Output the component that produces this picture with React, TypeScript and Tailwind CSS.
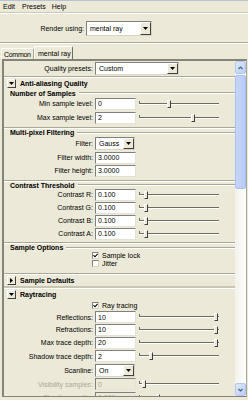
import React from "react";

const FONT = "font-['Liberation_Sans',Arial,sans-serif]";

function DownTri({ color = "#000" }: { color?: string }) {
  return (
    <svg width="5" height="3" viewBox="0 0 5 3">
      <path d="M0 0H5L2.5 3Z" fill={color} />
    </svg>
  );
}

function Dropdown({ w, text, h = "h-[13px]" }: { w: string; text: string; h?: string }) {
  return (
    <div className={`${w} ${h} flex bg-white border border-[#7f7f7f] border-b-[#d8d5c8] border-r-[#d8d5c8]`}>
      <div className="flex-1 flex items-center pl-[3px] overflow-hidden whitespace-nowrap">{text}</div>
      <div className="w-[11px] h-full bg-[#ece9d8] border border-white border-r-[#404040] border-b-[#404040] flex items-center justify-center">
        <DownTri />
      </div>
    </div>
  );
}

function Input({ val, disabled = false }: { val: string; disabled?: boolean }) {
  return (
    <div
      className={`w-[41px] h-[12px] flex items-center pl-[2px] border border-[#808080] border-b-[#e4e2d6] border-r-[#e4e2d6] ${
        disabled ? "bg-[#ece9d8] text-[#aca899]" : "bg-white"
      }`}
    >
      {val}
    </div>
  );
}

function Slider({ pos }: { pos: number }) {
  return (
    <div className="relative w-[80px] h-full ml-[3px]">
      <div className="absolute left-0 right-0 top-1/2 -translate-y-1/2 h-[2px] border-t border-[#6e6c62] border-b border-b-white" />
      <div className="absolute left-0 top-1/2 -translate-y-[3px] w-[1px] h-[3px] bg-[#6e6c62]" />
      <div
        className="absolute top-1/2 -translate-y-1/2 w-[4px] h-[8px] bg-[#ece9d8] border border-white border-r-[#404040] border-b-[#404040]"
        style={{ left: `${Math.round(pos * 75) + 2}px` }}
      />
    </div>
  );
}

function Label({ text, disabled = false }: { text: string; disabled?: boolean }) {
  return (
    <div className={`w-[91px] text-right pr-[2px] whitespace-nowrap ${disabled ? "text-[#aca899]" : ""}`}>{text}</div>
  );
}

function FieldRow({
  h,
  label,
  val,
  pos,
  disabled = false,
}: {
  h: string;
  label: string;
  val: string;
  pos?: number;
  disabled?: boolean;
}) {
  return (
    <div className={`${h} flex items-center`}>
      <Label text={label} disabled={disabled} />
      <Input val={val} disabled={disabled} />
      {pos !== undefined && <Slider pos={pos} />}
    </div>
  );
}

function Line() {
  return <div className="w-full h-[2px] border-t border-[#aca899] border-b border-b-white" />;
}

function Sep({ h }: { h: string }) {
  return (
    <div className={`${h} flex items-end`}>
      <Line />
    </div>
  );
}

function Title({ h, text }: { h: string; text: string }) {
  return (
    <div className={`${h} flex items-center pl-[6px]`}>
      <div className="font-bold whitespace-nowrap">{text}</div>
      <div className="flex-1 ml-[3px] h-[2px] border-t border-[#aca899] border-b border-b-white" />
    </div>
  );
}

function Header({ h, text, open }: { h: string; text: string; open: boolean }) {
  return (
    <div className={`${h} flex items-center pl-[3px]`}>
      <div className="w-[9px] h-[9px] bg-[#ece9d8] border border-white border-r-[#404040] border-b-[#404040] flex items-center justify-center">
        {open ? (
          <svg width="5" height="3" viewBox="0 0 5 3">
            <path d="M0 0H5L2.5 3Z" fill="#000" />
          </svg>
        ) : (
          <svg width="3" height="5" viewBox="0 0 3 5">
            <path d="M0 0V5L3 2.5Z" fill="#000" />
          </svg>
        )}
      </div>
      <div className="ml-[4px] font-bold whitespace-nowrap">{text}</div>
    </div>
  );
}

function Check({ h, text }: { h: string; text: string }) {
  return (
    <div className={`${h} flex items-center pl-[88px]`}>
      <div className="w-[7px] h-[7px] bg-white border border-[#808080] border-b-[#d8d5c8] border-r-[#d8d5c8] flex items-center justify-center">
        {text !== "Jitter" && (
          <svg width="5" height="5" viewBox="0 0 5 5">
            <path d="M0.5 2.2L2 3.8L4.6 0.8" stroke="#000" strokeWidth="1.1" fill="none" />
          </svg>
        )}
      </div>
      <div className="ml-[3px] whitespace-nowrap">{text}</div>
    </div>
  );
}

function ScrollBtn({ up }: { up: boolean }) {
  return (
    <div className="h-[13px] rounded-[2px] border border-[#b3c7f3] bg-gradient-to-br from-[#dfe9fd] to-[#b9cdf8] flex items-center justify-center">
      <svg width="5" height="4" viewBox="0 0 5 4">
        <path d={up ? "M0.5 3L2.5 1L4.5 3" : "M0.5 1L2.5 3L4.5 1"} stroke="#4d6185" strokeWidth="1.2" fill="none" />
      </svg>
    </div>
  );
}

export default function App() {
  return (
    <div className={`w-[248px] h-[400px] overflow-hidden bg-[#ece9d8] text-[7px] leading-none text-black ${FONT}`}>
      {/* menu bar */}
      <div className="h-[13px] flex items-center border-t border-[#b9c3d6] border-b border-b-[#cdcabb] pl-[3px]">
        <span>Edit</span>
        <span className="ml-[7px]">Presets</span>
        <span className="ml-[6px]">Help</span>
      </div>
      {/* render using */}
      <div className="h-[30px] flex items-center border-t border-white border-b border-b-[#aca899]">
        <div className="w-[86px] text-right pr-[2px]">Render using:</div>
        <Dropdown w="w-[66px]" h="h-[15px]" text="mental ray" />
      </div>
      {/* tabs */}
      <div className="h-[16px] flex items-end pl-[1px] border-t border-white">
        <div className="h-[11px] w-[33px] flex items-center pl-[2px] tracking-[-0.3px] border-t border-l border-white border-r border-r-[#aca899] rounded-tl-[2px] whitespace-nowrap">
          Common
        </div>
        <div className="h-[13px] w-[39px] flex items-center pl-[3px] border-t border-l border-white border-r border-r-[#716f64] rounded-t-[2px] whitespace-nowrap">
          mental ray
        </div>
      </div>
      {/* panel */}
      <div className="ml-[2px] w-[245px] h-[338px] border-t-2 border-l-2 border-[#85837a] border-r border-r-[#a7a492] border-b border-b-[#85837a] flex overflow-hidden">
        <div className="w-[231px] h-full overflow-hidden flex flex-col shrink-0">
          <div className="h-[15px] shrink-0 flex items-center">
            <Label text="Quality presets:" />
            <Dropdown w="w-[84px]" text="Custom" />
          </div>
          <Sep h="h-[2px] shrink-0" />
          <Header h="h-[11px] shrink-0" text="Anti-aliasing Quality" open />
          <Title h="h-[8px] shrink-0" text="Number of Samples" />
          <FieldRow h="h-[13px] shrink-0" label="Min sample level:" val="0" pos={0.34} />
          <FieldRow h="h-[15px] shrink-0" label="Max sample level:" val="2" pos={0.67} />
          <Sep h="h-[4px] shrink-0" />
          <Title h="h-[7px] shrink-0" text="Multi-pixel Filtering" />
          <div className="h-[15px] shrink-0 flex items-center">
            <Label text="Filter:" />
            <Dropdown w="w-[40px]" text="Gauss" />
          </div>
          <FieldRow h="h-[13px] shrink-0" label="Filter width:" val="3.0000" />
          <FieldRow h="h-[13px] shrink-0" label="Filter height:" val="3.0000" />
          <Sep h="h-[5px] shrink-0" />
          <Title h="h-[6px] shrink-0" text="Contrast Threshold" />
          <FieldRow h="h-[13px] shrink-0" label="Contrast R:" val="0.100" pos={0.04} />
          <FieldRow h="h-[13px] shrink-0" label="Contrast G:" val="0.100" pos={0.04} />
          <FieldRow h="h-[13px] shrink-0" label="Contrast B:" val="0.100" pos={0.04} />
          <FieldRow h="h-[13px] shrink-0" label="Contrast A:" val="0.100" pos={0.04} />
          <Sep h="h-[4px] shrink-0" />
          <Title h="h-[7px] shrink-0" text="Sample Options" />
          <Check h="h-[8px] shrink-0" text="Sample lock" />
          <Check h="h-[9px] shrink-0" text="Jitter" />
          <Sep h="h-[7px] shrink-0" />
          <Header h="h-[11px] shrink-0" text="Sample Defaults" open={false} />
          <div className="h-[3px] shrink-0 border-t-2 border-[#c9c6b6] border-b border-b-white" />
          <Header h="h-[10px] shrink-0" text="Raytracing" open />
          <Check h="h-[12px] shrink-0" text="Ray tracing" />
          <FieldRow h="h-[12px] shrink-0" label="Reflections:" val="10" pos={0.97} />
          <FieldRow h="h-[13px] shrink-0" label="Refractions:" val="10" pos={0.97} />
          <FieldRow h="h-[13px] shrink-0" label="Max trace depth:" val="20" pos={0.97} />
          <FieldRow h="h-[14px] shrink-0" label="Shadow trace depth:" val="2" pos={0.1} />
          <div className="h-[14px] shrink-0 flex items-center">
            <Label text="Scanline:" />
            <Dropdown w="w-[40px]" text="On" />
          </div>
          <FieldRow h="h-[14px] shrink-0" label="Visibility samples:" val="0" pos={0.01} disabled />
          <FieldRow h="h-[13px] shrink-0" label="Shading quality:" val="1.000" pos={0.2} disabled />
        </div>
        {/* scrollbar */}
        <div className="w-[11px] h-full flex flex-col bg-gradient-to-r from-[#f3f1ea] to-[#fefefe] shrink-0">
          <ScrollBtn up />
          <div className="mt-[1px] h-[114px] rounded-[2px] border border-[#a9bff2] bg-gradient-to-r from-[#c7d7fc] to-[#b6cbf8]" />
          <div className="flex-1" />
          <ScrollBtn up={false} />
        </div>
      </div>
    </div>
  );
}
